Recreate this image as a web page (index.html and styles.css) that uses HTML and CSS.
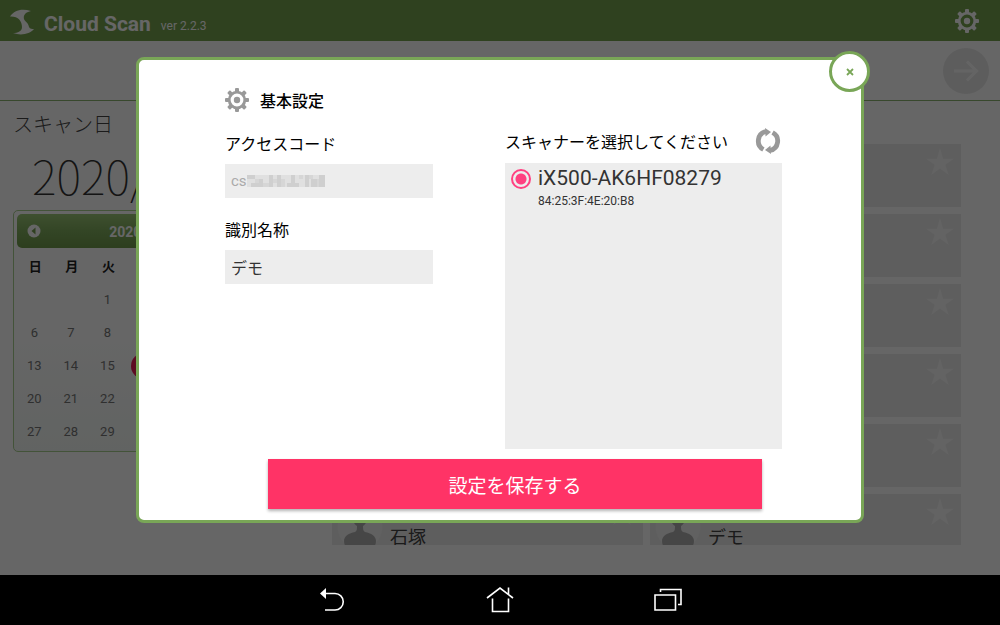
FILE: index.html
```html
<!DOCTYPE html>
<html lang="ja">
<head>
  <meta charset="UTF-8" />
  <meta name="viewport" content="width=device-width, initial-scale=1.0" />
  <title>Cloud Scan</title>
  <link rel="stylesheet" href="styles.css">
</head>
<body>
  <svg class="sprite" aria-hidden="true">
    <symbol id="gear" viewBox="0 0 24 24">
      <g fill="currentColor">
        <g id="teeth">
          <rect x="10" y="0" width="4" height="5" rx="1" />
          <rect x="10" y="19" width="4" height="5" rx="1" />
          <rect x="0" y="10" width="5" height="4" rx="1" />
          <rect x="19" y="10" width="5" height="4" rx="1" />
        </g>
        <use href="#teeth" transform="rotate(45 12 12)" />
        <circle cx="12" cy="12" r="3.2" />
      </g>
      <circle cx="12" cy="12" r="7.8" fill="none" stroke="currentColor" stroke-width="2.800" />
    </symbol>
    <symbol id="star" viewBox="0 0 28 28">
      <path fill="currentColor" d="M14 0l3.100 10.700H28l-8.700 6 3.400 10.300-8.700-6.500-8.700 6.500 3.400-10.300-8.700-6h10.900z" />
    </symbol>
    <symbol id="user" viewBox="0 0 46 46">
      <circle cx="23" cy="23" r="22.500" fill="#f2f2f2" />
      <path fill="#b0b0b0" d="M23 2c5 0 8 4 8 9 0 5-2 9-5 11 0 3 0 5 2 6 6 1 11 4 11 9 0 5-3 8-8 8H15c-5 0-8-3-8-8 0-5 5-8 11-9 2-1 2-3 2-6-3-2-5-6-5-11 0-5 3-9 8-9z" />
    </symbol>
  </svg>

  <div class="app">
    <header class="header">
      <svg class="logo" viewBox="0 0 24 26">
        <path fill="currentColor" d="M0 7.500C4 1 12-1 21 2c-5 1-8 4-7 8 1 3 4 3 5 8 1 2 3 2 5 2-4 5-13 7-21 4 5 0 9-2 9-6C12 12 8 7 0 7.500z" />
      </svg>
      <h1>Cloud Scan</h1>
      <span class="version">ver 2.2.3</span>
      <button class="icon-btn settings" type="button" aria-label="設定">
        <svg width="24" height="24"><use href="#gear" /></svg>
      </button>
    </header>

    <div class="toolbar">
      <button class="icon-btn next" type="button" aria-label="次へ">
        <svg width="26" height="24" viewBox="0 0 26 24" fill="none" stroke="currentColor" stroke-width="3">
          <path d="M1 12h22M14 2.500l9.500 9.500-9.500 9.500" />
        </svg>
      </button>
    </div>

    <main class="main">
      <section class="scan-date">
        <h2>スキャン日</h2>
        <p class="date">2020/09/16</p>
        <div class="calendar">
          <div class="calendar-head">
            <button class="icon-btn" type="button" aria-label="前月">
              <svg width="14" height="14" viewBox="0 0 14 14">
                <circle cx="7" cy="7" r="6.500" fill="#fff" />
                <path d="M8.500 3.500v7L4.500 7z" fill="#75a050" />
              </svg>
            </button>
            <span>2020年 9月</span>
            <button class="icon-btn" type="button" aria-label="翌月">
              <svg width="14" height="14" viewBox="0 0 14 14">
                <circle cx="7" cy="7" r="6.500" fill="#fff" />
                <path d="M5.500 3.500v7L9.500 7z" fill="#75a050" />
              </svg>
            </button>
          </div>
          <table>
            <thead>
              <tr><th>日</th><th>月</th><th>火</th><th>水</th><th>木</th><th>金</th><th>土</th></tr>
            </thead>
            <tbody>
              <tr><td></td><td></td><td>1</td><td>2</td><td>3</td><td>4</td><td>5</td></tr>
              <tr><td>6</td><td>7</td><td>8</td><td>9</td><td>10</td><td>11</td><td>12</td></tr>
              <tr><td>13</td><td>14</td><td>15</td><td><span class="today">16</span></td><td>17</td><td>18</td><td>19</td></tr>
              <tr><td>20</td><td>21</td><td>22</td><td>23</td><td>24</td><td>25</td><td>26</td></tr>
              <tr><td>27</td><td>28</td><td>29</td><td>30</td><td></td><td></td><td></td></tr>
            </tbody>
          </table>
        </div>
      </section>

      <section class="cards">
        <div class="card"><svg class="star"><use href="#star" /></svg></div>
        <div class="card"><svg class="star"><use href="#star" /></svg></div>
        <div class="card"><svg class="star"><use href="#star" /></svg></div>
        <div class="card"><svg class="star"><use href="#star" /></svg></div>
        <div class="card"><svg class="star"><use href="#star" /></svg></div>
        <div class="card"><svg class="star"><use href="#star" /></svg></div>
        <div class="card"><svg class="star"><use href="#star" /></svg></div>
        <div class="card"><svg class="star"><use href="#star" /></svg></div>
        <div class="card"><svg class="star"><use href="#star" /></svg></div>
        <div class="card"><svg class="star"><use href="#star" /></svg></div>
        <div class="card">
          <svg class="avatar"><use href="#user" /></svg>
          <span class="name">石塚</span>
          <svg class="star"><use href="#star" /></svg>
        </div>
        <div class="card">
          <svg class="avatar"><use href="#user" /></svg>
          <span class="name">デモ</span>
          <svg class="star"><use href="#star" /></svg>
        </div>
      </section>
    </main>

    <div class="overlay">
      <form class="modal" role="dialog" aria-labelledby="modal-title">
        <button class="close" type="button" aria-label="閉じる">
          <svg width="8" height="8" viewBox="0 0 8 8" stroke="currentColor" stroke-width="1.800"><path d="M1 1l6 6M7 1L1 7" /></svg>
        </button>

        <div class="modal-body">
          <div class="basic">
            <h2 id="modal-title"><svg width="24" height="24"><use href="#gear" /></svg>基本設定</h2>
            <label for="code">アクセスコード</label>
            <div class="code-wrapper">
              <input class="code" type="text" id="code" value="cs" readonly />
              <svg class="mosaic" width="78" height="14" viewBox="0 0 78 14">
                <rect y="1" width="78" height="12" fill="#e0e0e0" />
                <g fill="#cfcfcf">
                  <path d="M0 1h8v4H0zM4 9h8v4H4zM12 5h4v8h-4zM22 1h4v12h-4zM30 1h4v12h-4zM40 9h12v4H40zM44 1h4v8h-4zM58 1h4v12h-4zM64 5h6v8h-6zM72 1h6v12h-6z" />
                </g>
                <g fill="#d6d6d6">
                  <path d="M8 5h4v4H8zM16 9h6v4h-6zM26 5h4v4h-4zM34 5h4v8h-4zM52 1h4v4h-4zM62 1h4v4h-4zM70 5h2v8h-2z" />
                </g>
              </svg>
            </div>
            <label for="name">識別名称</label>
            <input type="text" id="name" value="デモ" />
          </div>

          <div class="scanner">
            <div class="scanner-head">
              <h3>スキャナーを選択してください</h3>
              <button class="icon-btn refresh" type="button" aria-label="再検索">
                <svg width="26" height="26" viewBox="0 0 26 26">
                  <g id="half">
                    <path d="M8.400 21.500A9.700 9.700 0 0 1 11 3.500" fill="none" stroke="currentColor" stroke-width="4.800" />
                    <path d="M10 0l6 4-5.500 4.500z" fill="currentColor" />
                  </g>
                  <use href="#half" transform="rotate(180 13 13)" />
                </svg>
              </button>
            </div>
            <div class="scanner-list">
              <label class="scanner-item">
                <input type="radio" name="scanner" checked />
                <span class="model">iX500-AK6HF08279</span>
                <span class="mac">84:25:3F:4E:20:B8</span>
              </label>
            </div>
          </div>
        </div>

        <button class="save" type="submit">設定を保存する</button>
      </form>
    </div>
  </div>

  <nav class="navbar">
    <button class="icon-btn" type="button" aria-label="戻る">
      <svg width="28" height="28" viewBox="0 0 28 28" fill="none" stroke="#fff" stroke-width="1.600">
        <path d="M7 7.500h10a8 8 0 0 1 0 16.500H7" />
        <path d="M2 7.500l6-5.500v11z" fill="#fff" stroke="none" />
      </svg>
    </button>
    <button class="icon-btn" type="button" aria-label="ホーム">
      <svg width="28" height="28" viewBox="0 0 28 28" fill="none" stroke="#fff" stroke-width="1.600">
        <path d="M1 12L14 2 27 12M6.500 12.500v13h16v-13M22.500 1.500v7" />
      </svg>
    </button>
    <button class="icon-btn" type="button" aria-label="履歴">
      <svg width="28" height="28" viewBox="0 0 28 28" fill="none" stroke="#fff" stroke-width="1.600">
        <path d="M1 9h20.500v15H1zM6.500 6V3.500H27v15h-3" />
      </svg>
    </button>
  </nav>
</body>
</html>
```

FILE: styles.css
```css
/* Reset & Base */
* {
  margin: 0;
  padding: 0;
  box-sizing: border-box;
}

body {
  display: flex;
  flex-direction: column;
  height: 100vh;
  overflow: hidden;
  background: #fff;
  color: #222;
  font-family: Roboto, 'Noto Sans CJK JP', sans-serif;
  font-size: 16px;
}

button,
input {
  font-family: inherit;
  border: none;
}

svg {
  display: block;
}

.sprite {
  position: absolute;
  width: 0;
  height: 0;
}

.icon-btn {
  background: none;
  color: inherit;
  cursor: pointer;
}

.app {
  position: relative;
  flex: 1;
  min-height: 0;
  overflow: hidden;
}

/* Header */
.header {
  display: flex;
  align-items: center;
  height: 41px;
  padding: 0 21px 0 10px;
  background: #75a34f;
  color: #fff;
}

.logo {
  width: 24px;
  height: 26px;
  margin: 2px 10px 0 0;
}

.header h1 {
  padding-top: 6px;
  font-size: 21px;
  line-height: 26px;
  font-weight: 700;
}

.version {
  padding: 10px 0 0 10px;
  font-size: 12px;
}

.settings {
  margin-left: auto;
}

/* Toolbar */
.toolbar {
  display: flex;
  justify-content: flex-end;
  align-items: center;
  height: 60px;
  padding-right: 11px;
  border-bottom: 1px solid #8db472;
}

.next {
  display: flex;
  justify-content: center;
  align-items: center;
  width: 46px;
  height: 46px;
  border-radius: 50%;
  background: #e9e9e9;
  color: #fbfbfb;
}

/* Scan date */
.main {
  display: flex;
  justify-content: space-between;
  padding: 9px 39px 0 13px;
}

.scan-date {
  width: 264px;
}

.scan-date h2 {
  color: #444;
  font-size: 20px;
  line-height: 30px;
  font-weight: 300;
}

.date {
  padding-left: 19px;
  color: #333;
  font-family: 'Noto Sans CJK JP', sans-serif;
  font-size: 47px;
  line-height: 70px;
  font-weight: 100;
}

.calendar {
  padding: 3px;
  border: 1px solid #a9cf8e;
  border-radius: 5px;
  background: linear-gradient(#fff 50%, #f3f8f5);
}

.calendar-head {
  display: flex;
  justify-content: space-between;
  align-items: center;
  height: 34px;
  padding: 0 10px;
  border-radius: 5px;
  background: linear-gradient(#9cc777, #80ad5d 50%, #709b4b);
  color: #fff;
  font-size: 14px;
  font-weight: 700;
}

.calendar table {
  width: 100%;
  border-collapse: collapse;
  table-layout: fixed;
  text-align: center;
}

.calendar th {
  height: 35px;
  font-size: 13px;
  font-weight: 700;
}

.calendar td {
  height: 33px;
  padding: 0 2px 0 0;
  color: #777;
  font-size: 13px;
}

.today {
  display: block;
  width: 26px;
  margin: 0 auto;
  border-radius: 50%;
  background: #e91e55;
  color: #fff;
  line-height: 26px;
}

/* Cards */
.cards {
  display: grid;
  grid-template-columns: 1fr 1fr;
  grid-auto-rows: 63px;
  gap: 7px;
  width: 629px;
  height: 401px;
  margin-top: 34px;
  overflow: hidden;
}

.card {
  display: flex;
  gap: 7px;
  padding: 4px 7px 6px 5px;
  background: #ebebeb;
}

.avatar {
  width: 46px;
  height: 46px;
  margin-top: 6px;
}

.name {
  align-self: flex-end;
  color: #444;
  font-size: 18px;
  line-height: 26px;
}

.star {
  width: 28px;
  height: 28px;
  margin-left: auto;
  color: #f8f8f8;
}

/* Modal */
.overlay {
  position: absolute;
  inset: 0;
  display: flex;
  justify-content: center;
  align-items: center;
  padding-top: 5px;
  background: rgba(0, 0, 0, 0.6);
}

.modal {
  position: relative;
  width: 100%;
  max-width: 728px;
  padding: 27px 79px 11px 86px;
  border: 3px solid #79a657;
  border-radius: 8px;
  background: #fff;
}

.close {
  position: absolute;
  top: -9px;
  right: -9px;
  display: flex;
  justify-content: center;
  align-items: center;
  width: 41px;
  height: 41px;
  border: 3px solid #79a657;
  border-radius: 50%;
  background: #fff;
  color: #79a657;
  cursor: pointer;
}

.modal-body {
  display: flex;
  justify-content: space-between;
}

.basic {
  width: 208px;
}

.basic h2 {
  display: flex;
  align-items: center;
  gap: 11px;
  height: 26px;
  margin-bottom: 20px;
  font-size: 16px;
  font-weight: 500;
  color: #000;
}

.basic h2 svg,
.refresh {
  color: #999;
}

.basic label {
  display: block;
  margin-bottom: 7px;
  color: #000;
  line-height: 24px;
}

.basic input {
  display: block;
  width: 100%;
  height: 34px;
  margin-bottom: 21px;
  padding: 0 6px;
  background: #ededed;
  color: #333;
  font-size: 16px;
}

.code-wrapper {
  position: relative;
}

.basic .code {
  color: #aaa;
  font-size: 15px;
}

.mosaic {
  position: absolute;
  top: 10px;
  left: 22px;
}

.scanner {
  width: 277px;
  padding-top: 41px;
}

.scanner-head {
  display: flex;
  justify-content: space-between;
  align-items: center;
  height: 26px;
  margin-bottom: 9px;
  padding-right: 1px;
}

.scanner-head h3 {
  color: #000;
  font-size: 16px;
  font-weight: 400;
}

.scanner-list {
  height: 286px;
  padding: 2px 6px;
  background: #ededed;
}

.scanner-item {
  display: grid;
  grid-template-columns: 20px 1fr;
  column-gap: 7px;
  align-items: center;
  color: #333;
}

.scanner-item input {
  appearance: none;
  width: 20px;
  height: 20px;
  margin-top: 2px;
  border: 2px solid #ff4081;
  border-radius: 50%;
  background: radial-gradient(#ff4081 5px, transparent 6px);
}

.model {
  font-size: 21px;
  line-height: 26px;
}

.mac {
  grid-column: 2;
  font-size: 12px;
  line-height: 20px;
}

.save {
  display: block;
  width: 494px;
  height: 50px;
  margin: 10px 0 0 43px;
  background: #ff3366;
  color: #fff;
  font-size: 19px;
  box-shadow: 0 2px 3px rgba(0, 0, 0, 0.3);
  cursor: pointer;
}

/* Android navigation bar */
.navbar {
  display: flex;
  justify-content: center;
  align-items: center;
  gap: 140px;
  height: 50px;
  background: #000;
}
```
